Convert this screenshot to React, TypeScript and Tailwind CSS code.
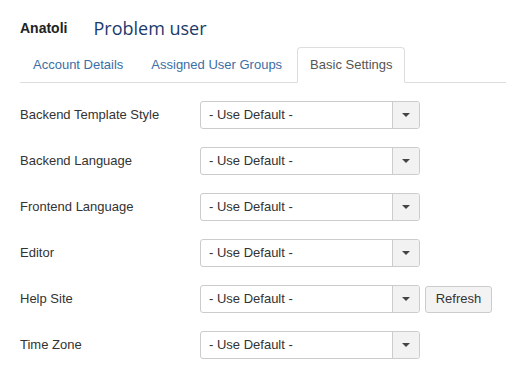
import React from "react";

const rows = [
  "Backend Template Style",
  "Backend Language",
  "Frontend Language",
  "Editor",
  "Help Site",
  "Time Zone",
];

const tabs = ["Account Details", "Assigned User Groups", "Basic Settings"];

export default function App() {
  return (
    <div className="w-[506px] h-[374px] bg-white font-['Liberation_Sans',Arial,sans-serif] text-[13px] text-[#333] pl-5">
      {/* title */}
      <div className="flex items-center h-[24px] pt-[16px] box-content">
        <span className="font-bold text-[14px] text-[#222]">Anatoli</span>
        <span className="ml-[26px] text-[18px] text-[#1c3a6b] font-['Open_Sans',sans-serif]">
          Problem user
        </span>
      </div>

      {/* tabs */}
      <ul className="flex mt-[7px] border-b border-[#ddd] h-[36px] items-end">
        {tabs.map((t, i) =>
          i === 2 ? (
            <li
              key={t}
              className="-mb-px h-[36px] px-[12px] flex items-center border border-[#ddd] border-b-white rounded-t-[4px] bg-white text-[#555]"
            >
              {t}
            </li>
          ) : (
            <li
              key={t}
              className="mr-[2px] h-[35px] px-[13px] flex items-center text-[#3b6ea5]"
            >
              {t}
            </li>
          )
        )}
      </ul>

      {/* settings */}
      <div className="flex flex-col gap-[18px] mt-[18px]">
        {rows.map((r) => (
          <div key={r} className="flex items-center h-[28px]">
            <label className="w-[180px]">{r}</label>
            <div className="flex w-[220px] h-[28px] border border-[#ccc] rounded-[3px] bg-white">
              <span className="flex-1 flex items-center pl-[8px] text-[#333]">
                - Use Default -
              </span>
              <span className="w-[27px] flex items-center justify-center border-l border-[#ccc] bg-[#f2f2f2] rounded-r-[3px]">
                <svg width="8" height="4" viewBox="0 0 8 4">
                  <path d="M0 0h8L4 4z" fill="#444" />
                </svg>
              </span>
            </div>
            {r === "Help Site" && (
              <button className="ml-[5px] w-[67px] h-[27px] border border-[#ccc] rounded-[3px] bg-[#f3f3f3] text-[#333]">
                Refresh
              </button>
            )}
          </div>
        ))}
      </div>
    </div>
  );
}
